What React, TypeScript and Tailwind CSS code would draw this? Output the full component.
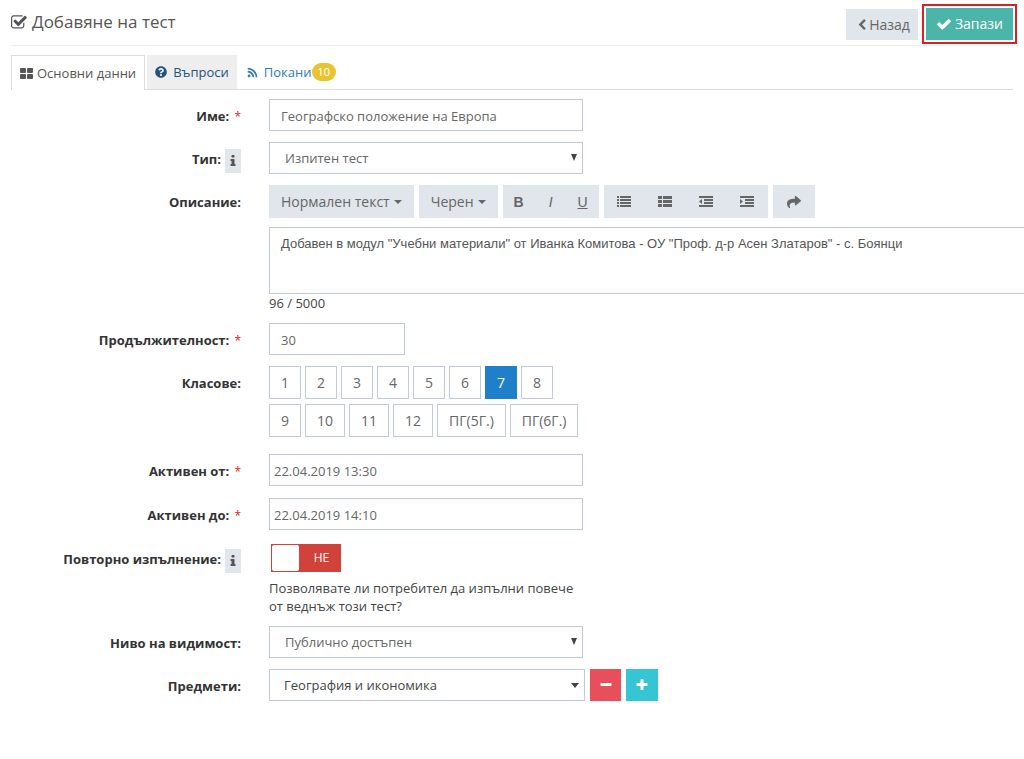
import React, { useState } from 'react';
import { FaQuestionCircle, FaRss, FaShare } from 'react-icons/fa';

interface IconProps {
    className?: string;
}

const PATHS = {
    checkSquare:
        'M1408 930v318q0 119-84.5 203.5t-203.5 84.5h-832q-119 0-203.5-84.5t-84.5-203.5v-832q0-119 84.5-203.5t203.5-84.5h832q63 0 117 25 15 7 18 23 3 17-9 29l-49 49q-10 10-23 10-3 0-9-2-23-6-45-6h-832q-66 0-113 47t-47 113v832q0 66 47 113t113 47h832q66 0 113-47t47-113v-254q0-13 9-22l64-64q10-10 23-10 6 0 12 3 20 8 20 29zm231-489l-814 814q-24 24-57 24t-57-24l-430-430q-24-24-24-57t24-57l110-110q24-24 57-24t57 24l263 263 647-647q24-24 57-24t57 24l110 110q24 24 24 57t-24 57z',
    check: 'M1671 566q0 40-28 68l-724 724-136 136q-28 28-68 28t-68-28l-136-136-362-362q-28-28-28-68t28-68l136-136q28-28 68-28t68 28l294 295 656-657q28-28 68-28t68 28l136 136q28 28 28 68z',
    chevronLeft:
        'M1427 301l-531 531 531 531q19 19 19 45t-19 45l-166 166q-19 19-45 19t-45-19l-742-742q-19-19-19-45t19-45l742-742q19-19 45-19t45 19l166 166q19 19 19 45t-19 45z',
    info: 'M1216 1344v128q0 26-19 45t-45 19h-512q-26 0-45-19t-19-45v-128q0-26 19-45t45-19h64v-384h-64q-26 0-45-19t-19-45v-128q0-26 19-45t45-19h384q26 0 45 19t19 45v576h64q26 0 45 19t19 45zm-128-1152v192q0 26-19 45t-45 19h-256q-26 0-45-19t-19-45v-192q0-26 19-45t45-19h256q26 0 45 19t19 45z',
    plus: 'M1600 736v192q0 40-28 68t-68 28h-416v416q0 40-28 68t-68 28h-192q-40 0-68-28t-28-68v-416h-416q-40 0-68-28t-28-68v-192q0-40 28-68t68-28h416v-416q0-40 28-68t68-28h192q40 0 68 28t28 68v416h416q40 0 68 28t28 68z',
    minus: 'M1600 736v192q0 40-28 68t-68 28h-1216q-40 0-68-28t-28-68v-192q0-40 28-68t68-28h1216q40 0 68 28t28 68z',
};

function Icon({ name, className }: IconProps & { name: keyof typeof PATHS }) {
    return (
        <svg viewBox="0 0 1792 1792" fill="currentColor" aria-hidden="true" className={className}>
            <path d={PATHS[name]} />
        </svg>
    );
}

function GridIcon() {
    return (
        <svg viewBox="0 0 13 11" fill="currentColor" aria-hidden="true" className="h-[11px] w-[13px]">
            <rect x="0" y="0" width="6" height="5" rx="1" />
            <rect x="7" y="0" width="6" height="5" rx="1" />
            <rect x="0" y="6" width="6" height="5" rx="1" />
            <rect x="7" y="6" width="6" height="5" rx="1" />
        </svg>
    );
}

type ListKind = 'bullets' | 'blocks' | 'outdent' | 'indent';

function ListIcon({ kind }: { kind: ListKind }) {
    return (
        <svg viewBox="0 0 16 12" fill="currentColor" aria-hidden="true" className="h-3 w-4">
            {kind === 'bullets' && <path d="M1 0h2v2H1zM1 3h2v2H1zM1 6h2v2H1zM1 9h2v2H1zM4 0h11v2H4zM4 3h11v2H4zM4 6h11v2H4zM4 9h11v2H4z" />}
            {kind === 'blocks' && <path d="M1 0h4v3H1zM1 4h4v3H1zM1 8h4v3H1zM6 0h9v3H6zM6 4h9v3H6zM6 8h9v3H6z" />}
            {kind === 'outdent' && <path d="M1 0h14v2H1zM6 3h9v2H6zM6 6h9v2H6zM1 9h14v2H1zM4 3v5L1 5.500z" />}
            {kind === 'indent' && <path d="M1 0h14v2H1zM6 3h9v2H6zM6 6h9v2H6zM1 9h14v2H1zM1 3v5l3-2.500z" />}
        </svg>
    );
}

function Caret() {
    return <span className="border-x-4 border-t-4 border-x-transparent border-t-current" />;
}

interface RowProps {
    label: string;
    htmlFor?: string;
    required?: boolean;
    info?: boolean;
    className?: string;
    children: React.ReactNode;
}

function Row({ label, htmlFor, required, info, className, children }: RowProps) {
    return (
        <div className={`flex gap-7 ${className ?? ''}`}>
            <div className="flex h-[34px] w-[230px] shrink-0 items-center justify-end gap-1 font-bold text-[#333]">
                <label htmlFor={htmlFor}>
                    {label}
                    {required && <span className="ml-0.5 text-xs font-normal text-[#e02222]"> *</span>}
                </label>
                {info && (
                    <button type="button" aria-label="Информация" className="mt-1 flex h-6 w-4 items-center justify-center bg-[#e1e5ec] text-[#555]">
                        <Icon name="info" className="h-3.5 w-3.5" />
                    </button>
                )}
            </div>
            <div className="min-w-0 flex-1">{children}</div>
        </div>
    );
}

interface SelectProps {
    id: string;
    options: string[];
    className?: string;
    wide?: boolean;
}

function Select({ id, options, className, wide }: SelectProps) {
    return (
        <div className={`relative w-full ${wide ? 'max-w-[316px]' : 'max-w-[314px]'}`}>
            <select id={id} className={`block h-8 w-full appearance-none border border-[#c2cad8] bg-white pr-8 ${className ?? ''}`}>
                {options.map((o) => (
                    <option key={o}>{o}</option>
                ))}
            </select>
            <span
                className={`pointer-events-none absolute border-x-transparent border-t-[#444] ${
                    wide ? 'top-3.5 right-1.5 border-x-4 border-t-[5px]' : 'top-3 right-1.5 border-x-[3px] border-t-[7px]'
                }`}
            />
        </div>
    );
}

const INPUT = 'block h-8 w-full border border-[#c2cad8] bg-white text-[#666]';
const TOOL = 'flex h-[33px] items-center justify-center';
const CLASSES = [
    ['1', '2', '3', '4', '5', '6', '7', '8'],
    ['9', '10', '11', '12', 'ПГ(5Г.)', 'ПГ(6Г.)'],
];
const LISTS: { kind: ListKind; title: string }[] = [
    { kind: 'bullets', title: 'Списък' },
    { kind: 'blocks', title: 'Номериран списък' },
    { kind: 'outdent', title: 'Намали отстъпа' },
    { kind: 'indent', title: 'Увеличи отстъпа' },
];

export default function App() {
    const [selected, setSelected] = useState('7');
    const [repeat, setRepeat] = useState(false);
    const [text, setText] = useState(
        'Добавен в модул "Учебни материали" от Иванка Комитова - ОУ "Проф. д-р Асен Златаров" - с. Боянци'
    );

    return (
        <div className="overflow-x-hidden bg-white px-[11px] pb-14 font-['Open_Sans','Noto_Sans',sans-serif] text-[13px] leading-[18px] text-[#444]">
            <header className="flex h-[46px] items-start justify-between border-b border-[#eee]">
                <h1 className="flex items-center gap-1 pt-2.5 text-[17px] leading-6 text-[#555]">
                    <Icon name="checkSquare" className="h-[17px] w-[17px]" />
                    Добавяне на тест
                </h1>
                <div className="-mr-1 flex items-start gap-1 pt-1 text-sm">
                    <button type="button" className="mt-[5px] flex h-[31px] items-center gap-px bg-[#e1e5ec] pr-2 pl-2.5 text-[#666]">
                        <Icon name="chevronLeft" className="h-3 w-3" />
                        Назад
                    </button>
                    <div className="border-2 border-[#d9202a] p-[2px]">
                        <button type="button" className="flex h-8 items-center gap-[3px] bg-[#4ab5a8] px-2.5 text-white">
                            <Icon name="check" className="h-4 w-4" />
                            Запази
                        </button>
                    </div>
                </div>
            </header>

            <nav className="mt-[9px] flex h-[35px] border-b border-[#ddd]">
                <a href="#main" className="-mb-px flex items-center gap-1 border border-b-0 border-[#ddd] bg-white px-2 text-[#555]">
                    <GridIcon />
                    Основни данни
                </a>
                <a href="#questions" className="ml-0.5 flex items-center gap-1.5 bg-[#eee] px-2 text-[#23527c]">
                    <FaQuestionCircle size={12} />
                    Въпроси
                </a>
                <a href="#invites" className="flex items-center gap-1.5 pl-2.5 text-[#337ab7]">
                    <FaRss size={11} />
                    <span className="flex items-center">
                        Покани
                        <span className="rounded-full bg-[#e8c430] px-1.5 text-[11px] text-white">10</span>
                    </span>
                </a>
            </nav>

            <form onSubmit={(e) => e.preventDefault()}>
                <Row label="Име:" htmlFor="name" required className="mt-[9px]">
                    <input id="name" defaultValue="Географско положение на Европа" className={`${INPUT} max-w-[314px] px-[11px] pt-0.5`} />
                </Row>
                <Row label="Тип:" htmlFor="type" info className="mt-[9px]">
                    <Select id="type" options={['Изпитен тест', 'Анкета']} className="pl-[15px] text-[#666]" />
                </Row>
                <Row label="Описание:" htmlFor="description" className="mt-[9px]">
                    <div className="flex gap-[5px] text-sm text-[#666]">
                        <button type="button" className={`${TOOL} gap-1 bg-[#e1e5ec] px-3`}>
                            Нормален текст <Caret />
                        </button>
                        <button type="button" className={`${TOOL} gap-1 bg-[#e1e5ec] px-3`}>
                            Черен <Caret />
                        </button>
                        <div className="flex bg-[#e1e5ec] font-['Liberation_Sans',Arial,sans-serif]">
                            <button type="button" className={`${TOOL} w-8 font-bold`}>B</button>
                            <button type="button" className={`${TOOL} w-8 italic`}>I</button>
                            <button type="button" className={`${TOOL} w-8 underline`}>U</button>
                        </div>
                        <div className="flex bg-[#e1e5ec]">
                            {LISTS.map(({ kind, title }) => (
                                <button key={kind} type="button" aria-label={title} className={`${TOOL} w-[41px]`}>
                                    <ListIcon kind={kind} />
                                </button>
                            ))}
                        </div>
                        <button type="button" aria-label="Върни" className={`${TOOL} w-[42px] bg-[#e1e5ec]`}>
                            <FaShare size={14} />
                        </button>
                    </div>
                    <div className="-mr-4 mt-[9px]">
                        <textarea
                            id="description"
                            value={text}
                            maxLength={5000}
                            onChange={(e) => setText(e.target.value)}
                            className="block h-[67px] w-full resize-none border border-[#c2cad8] px-[11px] py-[7px] font-['Liberation_Sans',Arial,sans-serif] text-[13px] text-[#555]"
                        />
                    </div>
                    <p>{text.length} / 5000</p>
                </Row>
                <Row label="Продължителност:" htmlFor="duration" required className="mt-[11px]">
                    <input id="duration" defaultValue="30" className={`${INPUT} max-w-[136px] px-[11px] pt-0.5`} />
                </Row>
                <Row label="Класове:" className="mt-[9px]">
                    <div className="flex flex-col gap-[5px]">
                        {CLASSES.map((line) => (
                            <div key={line[0]} className="flex gap-1">
                                {line.map((c) => (
                                    <button
                                        key={c}
                                        type="button"
                                        aria-pressed={c === selected}
                                        onClick={() => setSelected(c)}
                                        className={`h-[33px] border px-[11px] text-sm ${
                                            c === selected ? 'border-[#1f7fc9] bg-[#1f7fc9] text-white' : 'border-[#c2cad8] bg-white text-[#666]'
                                        }`}
                                    >
                                        {c}
                                    </button>
                                ))}
                            </div>
                        ))}
                    </div>
                </Row>
                <Row label="Активен от:" htmlFor="from" required className="mt-[17px]">
                    <input id="from" defaultValue="22.04.2019 13:30" className={`${INPUT} max-w-[314px] px-1 pt-0.5`} />
                </Row>
                <Row label="Активен до:" htmlFor="to" required className="mt-2.5">
                    <input id="to" defaultValue="22.04.2019 14:10" className={`${INPUT} max-w-[314px] px-1 pt-0.5`} />
                </Row>
                <Row label="Повторно изпълнение:" htmlFor="repeat" info className="mt-2.5">
                    <label className="ml-0.5 mt-0.5 flex h-7 w-[70px] border border-[#d0423a] bg-[#d0423a] text-xs text-white">
                        <input
                            id="repeat"
                            type="checkbox"
                            checked={repeat}
                            onChange={(e) => setRepeat(e.target.checked)}
                            className="peer sr-only"
                        />
                        <span className="w-[27px] rounded-xs bg-white peer-checked:order-2" />
                        <span className="flex flex-1 items-center justify-center pl-1">{repeat ? 'ДА' : 'НЕ'}</span>
                    </label>
                    <p className="mt-[7px] max-w-[315px]">Позволявате ли потребител да изпълни повече от веднъж този тест?</p>
                </Row>
                <Row label="Ниво на видимост:" htmlFor="visibility" className="mt-[11px]">
                    <Select id="visibility" options={['Публично достъпен', 'Личен']} className="pl-[15px] text-[#666]" />
                </Row>
                <Row label="Предмети:" htmlFor="subject" className="mt-[9px]">
                    <div className="flex gap-[5px]">
                        <Select id="subject" wide options={['География и икономика', 'История']} className="pl-3.5 text-[#444]" />
                        <button type="button" aria-label="Премахни" className="flex h-8 w-[31px] items-center justify-center bg-[#e7505a] text-white">
                            <Icon name="minus" className="h-3.5 w-3.5" />
                        </button>
                        <button type="button" aria-label="Добави" className="flex h-8 w-8 items-center justify-center bg-[#36c6d3] text-white">
                            <Icon name="plus" className="h-3.5 w-3.5" />
                        </button>
                    </div>
                </Row>
            </form>
        </div>
    );
}
